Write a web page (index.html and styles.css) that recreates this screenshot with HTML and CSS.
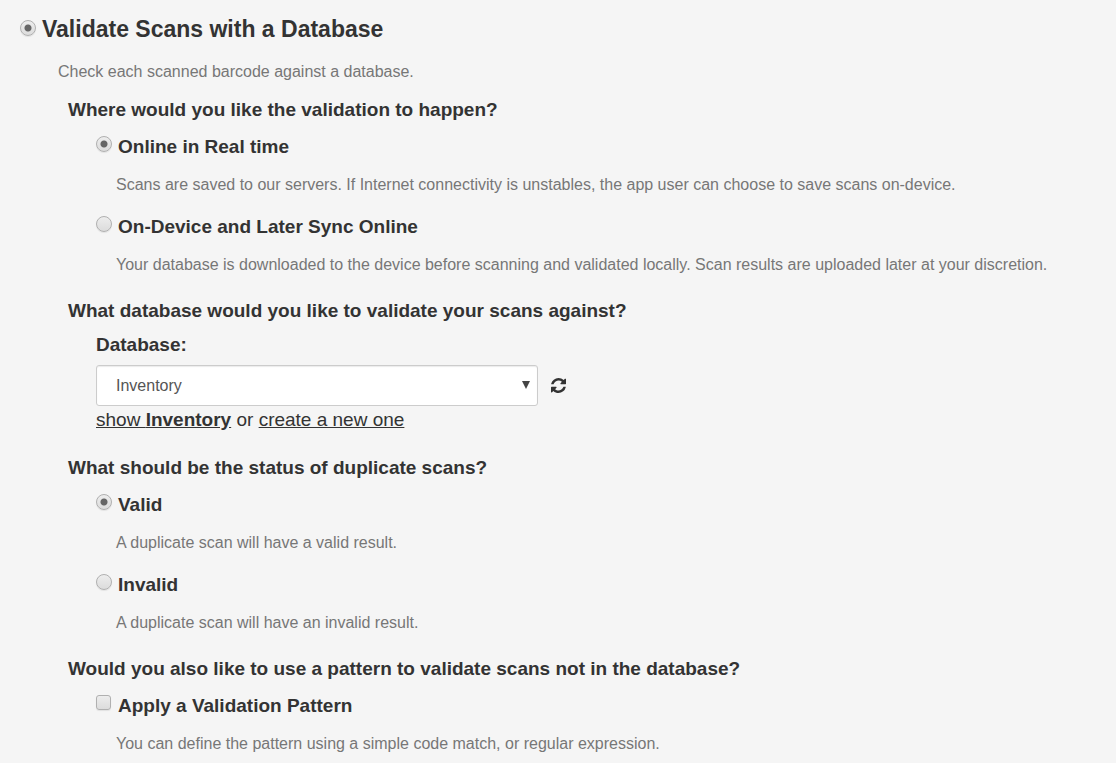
FILE: index.html
```html
<!DOCTYPE html>
<html lang="en">
<head>
    <meta charset="UTF-8">
    <meta name="viewport" content="width=device-width, initial-scale=1.0">
    <title>Validate Scans with a Database</title>
    <link rel="stylesheet" href="styles.css">
</head>
<body>
    <form class="validation">
        <div class="option main-option">
            <input type="radio" id="validate-database" name="validation" checked>
            <label for="validate-database">Validate Scans with a Database</label>
        </div>
        <p class="help main-help">Check each scanned barcode against a database.</p>

        <section class="question">
            <h2>Where would you like the validation to happen?</h2>
            <div class="choices">
                <div class="option">
                    <input type="radio" id="online" name="location" checked>
                    <label for="online">Online in Real time</label>
                </div>
                <p class="help">Scans are saved to our servers. If Internet connectivity is unstables, the app user can choose to save scans on-device.</p>
                <div class="option">
                    <input type="radio" id="on-device" name="location">
                    <label for="on-device">On-Device and Later Sync Online</label>
                </div>
                <p class="help">Your database is downloaded to the device before scanning and validated locally. Scan results are uploaded later at your discretion.</p>
            </div>
        </section>

        <section class="question">
            <h2>What database would you like to validate your scans against?</h2>
            <div class="database">
                <label for="database">Database:</label>
                <div class="database-row">
                    <div class="select-wrap">
                        <select id="database">
                            <option>Inventory</option>
                        </select>
                    </div>
                    <button type="button" class="refresh" aria-label="Refresh databases">
                        <svg viewBox="0 0 1536 1536" width="15" height="15" aria-hidden="true">
                            <path d="M1511 928q0 5-1 7-64 268-268 434.500T764 1536q-146 0-282.500-55T238 1324l-129 129q-19 19-45 19t-45-19-19-45V960q0-26 19-45t45-19h448q26 0 45 19t19 45-19 45l-137 137q71 66 161 102t187 36q134 0 250-65t186-179q11-17 53-117 8-23 30-23h192q13 0 22.500 9.500t9.500 22.500zM1536 128v448q0 26-19 45t-45 19h-448q-26 0-45-19t-19-45 19-45l138-138Q969 256 768 256q-134 0-250 65T332 500q-11 17-53 117-8 23-30 23H50q-13 0-22.500-9.500T18 608v-7q65-268 270-434.500T768 0q146 0 284 55.500T1297 212l130-129q19-19 45-19t45 19 19 45z"/>
                        </svg>
                    </button>
                </div>
                <p class="links"><a href="#">show <b>Inventory</b></a> or <a href="#">create a new one</a></p>
            </div>
        </section>

        <section class="question">
            <h2>What should be the status of duplicate scans?</h2>
            <div class="choices">
                <div class="option">
                    <input type="radio" id="valid" name="duplicates" checked>
                    <label for="valid">Valid</label>
                </div>
                <p class="help">A duplicate scan will have a valid result.</p>
                <div class="option">
                    <input type="radio" id="invalid" name="duplicates">
                    <label for="invalid">Invalid</label>
                </div>
                <p class="help">A duplicate scan will have an invalid result.</p>
            </div>
        </section>

        <section class="question">
            <h2>Would you also like to use a pattern to validate scans not in the database?</h2>
            <div class="choices">
                <div class="option">
                    <input type="checkbox" id="pattern">
                    <label for="pattern">Apply a Validation Pattern</label>
                </div>
                <p class="help">You can define the pattern using a simple code match, or regular expression.</p>
            </div>
        </section>
    </form>
</body>
</html>
```
FILE: styles.css
```css
* {
    box-sizing: border-box;
}

body {
    margin: 0;
    background-color: #f5f5f5;
    color: #333;
    font-family: Arial, "Liberation Sans", sans-serif;
    font-size: 19px;
    line-height: 28px;
}

h2, p {
    margin: 0;
}

h2 {
    font-size: 19px;
    line-height: 28px;
}

.validation {
    padding: 13px 20px 8px;
}

.option {
    display: flex;
    align-items: flex-start;
    gap: 6px;
    font-weight: bold;
}

.main-option {
    font-size: 23px;
    line-height: 32px;
}

.help {
    color: #777;
    font-size: 16px;
    line-height: 24px;
}

.main-help {
    margin: 15px 0 12px 38px;
}

/* Radio buttons and tick box */
input {
    appearance: none;
    flex: none;
    width: 16px;
    height: 16px;
    margin: 3px 0 0;
    border: 1px solid #b0b0b0;
    background: linear-gradient(#ededed, #dcdcdc);
    box-shadow: 0 1px 1px rgba(0, 0, 0, 0.08);
}

.main-option input {
    margin-top: 7px;
}

input[type="radio"] {
    border-radius: 50%;
}

input[type="radio"]:checked {
    background: radial-gradient(circle, #666 0, #666 3px, transparent 4px), linear-gradient(#ededed, #dcdcdc);
}

input[type="checkbox"] {
    width: 15px;
    height: 15px;
    margin-right: 1px;
    border-radius: 3px;
}

/* Questions */
.question {
    margin: 0 0 20px 48px;
}

.question:last-child {
    margin-bottom: 0;
}

.choices {
    margin: 9px 0 0 28px;
}

.choices .help {
    margin: 12px 0 16px 20px;
}

.choices .help:last-child {
    margin-bottom: 0;
}

.database {
    margin: 6px 0 0 28px;
}

.database label {
    display: block;
    font-weight: bold;
}

.database-row {
    display: flex;
    align-items: center;
    gap: 13px;
    margin-top: 6px;
}

.select-wrap {
    position: relative;
    width: 100%;
    max-width: 442px;
}

.select-wrap::after {
    content: "";
    position: absolute;
    top: 16px;
    right: 8px;
    border: 4px solid transparent;
    border-top: 8px solid #444;
    border-bottom: 0;
    pointer-events: none;
}

select {
    appearance: none;
    display: block;
    width: 100%;
    height: 41px;
    padding: 0 32px 0 19px;
    border: 1px solid #ccc;
    border-radius: 3px;
    background-color: #fff;
    box-shadow: inset 0 1px 1px rgba(0, 0, 0, 0.08);
    color: #555;
    font-family: inherit;
    font-size: 16px;
}

.refresh {
    display: flex;
    padding: 0;
    border: 0;
    background: none;
    color: #333;
    cursor: pointer;
}

.refresh svg {
    fill: currentColor;
}

a {
    color: #333;
    text-decoration: underline;
}
```
